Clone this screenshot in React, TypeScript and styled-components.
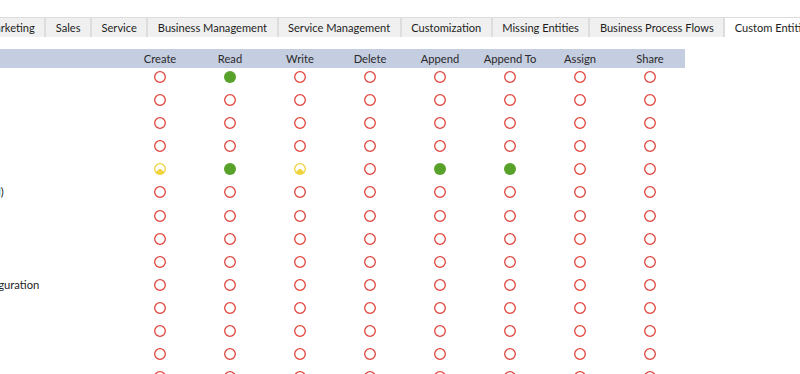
import { Fragment, useLayoutEffect, useRef } from "react";
import styled, { createGlobalStyle } from "styled-components";

type Level = "none" | "user" | "org";

const GRID_SCROLL = 100;
const LABEL_WIDTH = 125 + GRID_SCROLL;
// right edge of the partly hidden "Marketing" tab in the reference
const MARKETING_EDGE = 47;

const tabs = [
  "Details",
  "Core Records",
  "Marketing",
  "Sales",
  "Service",
  "Business Management",
  "Service Management",
  "Customization",
  "Missing Entities",
  "Business Process Flows",
  "Custom Entities",
];

const columns = ["Create", "Read", "Write", "Delete", "Append", "Append To", "Assign", "Share"];

const none: Level[] = ["none", "none", "none", "none", "none", "none", "none", "none"];

const rows: { label: string; levels: Level[] }[] = [
  { label: "", levels: ["none", "org", "none", "none", "none", "none", "none", "none"] },
  { label: "", levels: none },
  { label: "", levels: none },
  { label: "", levels: none },
  { label: "", levels: ["user", "org", "user", "none", "org", "org", "none", "none"] },
  { label: "Process Session (Old)", levels: none },
  { label: "", levels: none },
  { label: "", levels: none },
  { label: "", levels: none },
  { label: "Social Insights Configuration", levels: none },
  { label: "", levels: none },
  { label: "", levels: none },
  { label: "", levels: none },
  { label: "", levels: none },
];

const GlobalStyle = createGlobalStyle`
  html, body {
    margin: 0;
    overflow: hidden;
    background: #ffffff;
    font-family: Lato, "Open Sans", sans-serif;
    color: #1e1e1e;
  }
`;

const Page = styled.div`
  width: 800px;
  height: 374px;
  overflow: hidden;
  padding-top: 17px;
  box-sizing: border-box;
`;

const TabViewport = styled.div`
  overflow: hidden;
  border-top: 1px solid #dcdcdc;
`;

const TabStrip = styled.div`
  display: flex;
  width: max-content;
  padding-right: 200px;
`;

const Tab = styled.div<{ $active?: boolean }>`
  height: 19px;
  line-height: 19px;
  padding: 0 9.5px;
  font-size: 11.1px;
  white-space: nowrap;
  background: ${({ $active }) => ($active ? "#ffffff" : "#f0f0f0")};
  border-right: 2px solid #dddddd;
  color: #1e1e1e;
`;

const GridViewport = styled.div`
  overflow: hidden;
  margin-top: 12px;
`;

const Grid = styled.div`
  display: grid;
  width: max-content;
  padding-right: 200px;
  grid-template-columns: ${LABEL_WIDTH}px repeat(8, 70px);
`;

const HeaderCell = styled.div`
  height: 19px;
  line-height: 19px;
  background: #c5cde0;
  text-align: center;
  font-size: 11.2px;
  color: #2a2a2a;
  white-space: nowrap;
`;

const LabelCell = styled.div`
  height: 23.1px;
  padding-top: 3px;
  box-sizing: border-box;
  font-size: 11.2px;
  line-height: 12px;
  white-space: nowrap;
  overflow: hidden;
  color: #1e1e1e;
`;

const Cell = styled.div`
  height: 23.1px;
  padding-top: 3px;
  box-sizing: border-box;
  display: flex;
  justify-content: center;
  align-items: flex-start;
`;

const Dot = ({ level }: { level: Level }) => {
  if (level === "org") {
    return (
      <svg width="12" height="12" viewBox="0 0 12 12">
        <circle cx="6" cy="6" r="6" fill="#58a12a" />
      </svg>
    );
  }
  if (level === "user") {
    return (
      <svg width="12" height="12" viewBox="0 0 12 12">
        <circle cx="6" cy="6" r="5.3" fill="#ffffff" stroke="#efd33f" strokeWidth="1.3" />
        <path d="M1.6 9.2 L4.6 6.4 Q6 5.1 7.4 6.4 L10.4 9.2 A5.3 5.3 0 0 1 1.6 9.2 Z" fill="#efd33f" />
      </svg>
    );
  }
  return (
    <svg width="12" height="12" viewBox="0 0 12 12">
      <circle cx="6" cy="6" r="5.3" fill="#ffffff" stroke="#e0443c" strokeWidth="1.3" />
    </svg>
  );
};

const App = () => {
  const tabRef = useRef<HTMLDivElement>(null);
  const marketingRef = useRef<HTMLDivElement>(null);
  const gridRef = useRef<HTMLDivElement>(null);

  useLayoutEffect(() => {
    const m = marketingRef.current;
    if (tabRef.current && m) {
      tabRef.current.scrollLeft = m.offsetLeft + m.offsetWidth - MARKETING_EDGE;
    }
    if (gridRef.current) {
      gridRef.current.scrollLeft = GRID_SCROLL;
    }
  }, []);

  return (
    <>
      <GlobalStyle />
      <Page>
        <TabViewport ref={tabRef}>
          <TabStrip>
            {tabs.map((t) => (
              <Tab key={t} ref={t === "Marketing" ? marketingRef : undefined} $active={t === "Custom Entities"}>
                {t}
              </Tab>
            ))}
          </TabStrip>
        </TabViewport>
        <GridViewport ref={gridRef}>
          <Grid>
            <HeaderCell />
            {columns.map((c) => (
              <HeaderCell key={c}>{c}</HeaderCell>
            ))}
            {rows.map((r, i) => (
              <Fragment key={i}>
                <LabelCell>{r.label}</LabelCell>
                {r.levels.map((lv, j) => (
                  <Cell key={j}>
                    <Dot level={lv} />
                  </Cell>
                ))}
              </Fragment>
            ))}
          </Grid>
        </GridViewport>
      </Page>
    </>
  );
};

export default App;
